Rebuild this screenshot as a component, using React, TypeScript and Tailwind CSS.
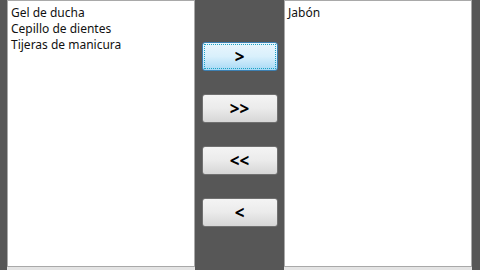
import React, { useState } from 'react';

const left = ['Gel de ducha', 'Cepillo de dientes', 'Tijeras de manicura'];
const right = ['Jabón'];

function ListBox({ items }: { items: string[] }) {
  return (
    <div className="h-full w-[188px] flex flex-col">
      <div className="h-[267px] bg-white border border-[#a9a9a9] pt-[4px] pl-[3px]">
        {items.map((it) => (
          <div key={it} className="h-[16px] leading-[16px] text-[12px] text-[#111]">
            {it}
          </div>
        ))}
      </div>
      <div className="flex-1 bg-[#e4e4e4]" />
    </div>
  );
}

function MoveButton({ label, focused }: { label: string; focused?: boolean }) {
  if (focused) {
    return (
      <button className="w-[76px] h-[29px] rounded-[3px] border border-[#3c7fb1] bg-gradient-to-b from-[#eaf6fd] via-[#d9f0fc] to-[#a7d9f5] p-[1px]">
        <div className="w-full h-full border border-dotted border-[#1aa3c4] flex items-center justify-center text-[17px] font-bold text-black">
          {label}
        </div>
      </button>
    );
  }
  return (
    <button className="w-[76px] h-[29px] rounded-[3px] border border-[#707070] bg-gradient-to-b from-[#f4f4f4] via-[#ebebeb] to-[#d6d6d6] flex items-center justify-center text-[17px] font-bold text-black">
      {label}
    </button>
  );
}

export default function App() {
  const [selected] = useState('>');
  return (
    <div
      className="w-[480px] h-[270px] bg-[#575757] flex overflow-hidden"
      style={{ fontFamily: '"Noto Sans", "DejaVu Sans", sans-serif' }}
    >
      <div className="pl-[7px] h-full">
        <ListBox items={left} />
      </div>
      <div className="flex-1 flex flex-col items-center pt-[42px] gap-[23px]">
        {['>', '>>', '<<', '<'].map((l) => (
          <MoveButton key={l} label={l} focused={l === selected} />
        ))}
      </div>
      <div className="pr-[8px] h-full">
        <ListBox items={right} />
      </div>
    </div>
  );
}
